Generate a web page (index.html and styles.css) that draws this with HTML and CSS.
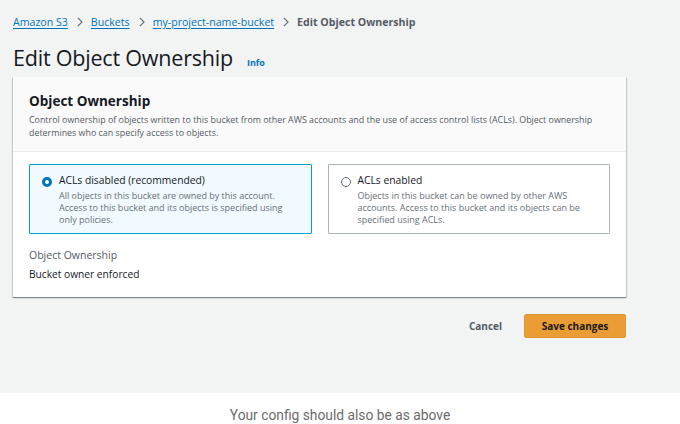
FILE: index.html
```html
<!DOCTYPE html>
<html lang="en">
<head>
<meta charset="utf-8">
<title>Edit Object Ownership</title>
<link rel="stylesheet" href="styles.css">
</head>
<body>
<div class="console">
  <nav class="crumbs">
    <a class="crumb-link" href="#">Amazon S3</a>
    <svg class="chev" viewBox="0 0 8 12" width="7" height="10"><path d="M2 1l5 5-5 5" fill="none" stroke="#687078" stroke-width="1.4"/></svg>
    <a class="crumb-link" href="#">Buckets</a>
    <svg class="chev" viewBox="0 0 8 12" width="7" height="10"><path d="M2 1l5 5-5 5" fill="none" stroke="#687078" stroke-width="1.4"/></svg>
    <a class="crumb-link" href="#">my-project-name-bucket</a>
    <svg class="chev" viewBox="0 0 8 12" width="7" height="10"><path d="M2 1l5 5-5 5" fill="none" stroke="#687078" stroke-width="1.4"/></svg>
    <span class="crumb-current">Edit Object Ownership</span>
  </nav>
  <div class="title-row">
    <h1 class="page-title">Edit Object Ownership</h1>
    <a class="info" href="#">Info</a>
  </div>
  <section class="card">
    <header class="card-head">
      <h2 class="card-title">Object Ownership</h2>
      <p class="card-desc">Control ownership of objects written to this bucket from other AWS accounts and the use of access control lists (ACLs). Object ownership determines who can specify access to objects.</p>
    </header>
    <div class="card-body">
      <div class="tiles">
        <div class="tile tile-selected">
          <span class="radio radio-on"></span>
          <div class="tile-text">
            <div class="tile-label">ACLs disabled (recommended)</div>
            <div class="tile-desc">All objects in this bucket are owned by this account. Access to this bucket and its objects is specified using only policies.</div>
          </div>
        </div>
        <div class="tile">
          <span class="radio"></span>
          <div class="tile-text">
            <div class="tile-label">ACLs enabled</div>
            <div class="tile-desc">Objects in this bucket can be owned by other AWS accounts. Access to this bucket and its objects can be specified using ACLs.</div>
          </div>
        </div>
      </div>
      <div class="field">
        <div class="field-label">Object Ownership</div>
        <div class="field-value">Bucket owner enforced</div>
      </div>
    </div>
  </section>
  <div class="actions">
    <button class="btn-link">Cancel</button>
    <button class="btn-primary">Save changes</button>
  </div>
</div>
<p class="caption">Your config should also be as above</p>
</body>
</html>
```
FILE: styles.css
```css
* { box-sizing: border-box; }
html, body { margin: 0; padding: 0; background: #ffffff; }
body { font-family: "Open Sans", "Noto Sans", sans-serif; color: #16191f; }

.console {
  background: #f2f3f3;
  height: 393px;
  padding: 13px 54px 0 13px;
}

.crumbs {
  display: flex;
  align-items: center;
  gap: 8px;
  height: 17px;
  font-size: 10.6px;
}
.crumb-link { color: #0073bb; text-decoration: underline; text-underline-offset: 2px; }
.crumb-current { color: #545b64; font-weight: 700; }
.chev { display: block; }

.title-row {
  display: flex;
  align-items: baseline;
  gap: 14px;
  margin-top: 13px;
  height: 34px;
}
.page-title {
  margin: 0;
  font-size: 21.5px;
  font-weight: 400;
  letter-spacing: -0.2px;
  color: #16191f;
  line-height: 30px;
}
.info { color: #0073bb; font-size: 9px; font-weight: 700; text-decoration: none; }

.card {
  background: #ffffff;
  box-shadow: 0 1px 1px rgba(0,28,36,0.3), 1px 1px 1px rgba(0,28,36,0.15), -1px 1px 1px rgba(0,28,36,0.15);
  height: 220px;
}
.card-head {
  background: #fafafa;
  border-bottom: 1px solid #eaeded;
  padding: 14px 16px;
  height: 75px;
}
.card-title { margin: 0; font-size: 13.5px; font-weight: 700; line-height: 20px; }
.card-desc { margin: 2px 0 0; font-size: 8.9px; line-height: 13px; color: #545b64; }

.card-body { padding: 12px 16px 0 16px; }
.tiles { display: grid; grid-template-columns: 1fr 1fr; gap: 16px; }
.tile {
  display: flex;
  gap: 7px;
  height: 70px;
  padding: 8px 12px;
  border: 1px solid #aab7b8;
  border-radius: 1px;
  background: #ffffff;
}
.tile-selected { background: #f1faff; border-color: #00a1c9; }
.radio {
  flex: none;
  width: 10px; height: 10px;
  margin-top: 4px;
  border-radius: 50%;
  border: 1px solid #687078;
  background: #fff;
}
.radio-on { border: 3px solid #0073bb; }
.tile-text { max-width: 226px; }
.tile-label { font-size: 10.3px; line-height: 15px; color: #16191f; }
.tile-desc { font-size: 9px; line-height: 12px; color: #687078; margin-top: 2px; }

.field { margin-top: 13px; }
.field-label { font-size: 10.5px; line-height: 16px; color: #545b64; }
.field-value { font-size: 10.2px; line-height: 14px; color: #16191f; margin-top: 4px; }

.actions {
  display: flex;
  justify-content: flex-end;
  align-items: center;
  gap: 22px;
  margin-top: 17px;
}
.btn-link {
  font-family: inherit; background: none; border: 0; padding: 0;
  font-size: 10px; font-weight: 700; color: #545b64;
}
.btn-primary {
  font-family: inherit;
  width: 102px; height: 24px;
  background: #eb9d35;
  border: 1px solid #e3962f;
  border-radius: 2px;
  font-size: 10px; font-weight: 700; color: #16191f;
  padding: 0;
}

.caption {
  margin: 0;
  height: 31px;
  line-height: 44px;
  text-align: center;
  font-family: Roboto, "Liberation Sans", sans-serif;
  font-size: 13.8px;
  color: #6b6b6b;
}
```
